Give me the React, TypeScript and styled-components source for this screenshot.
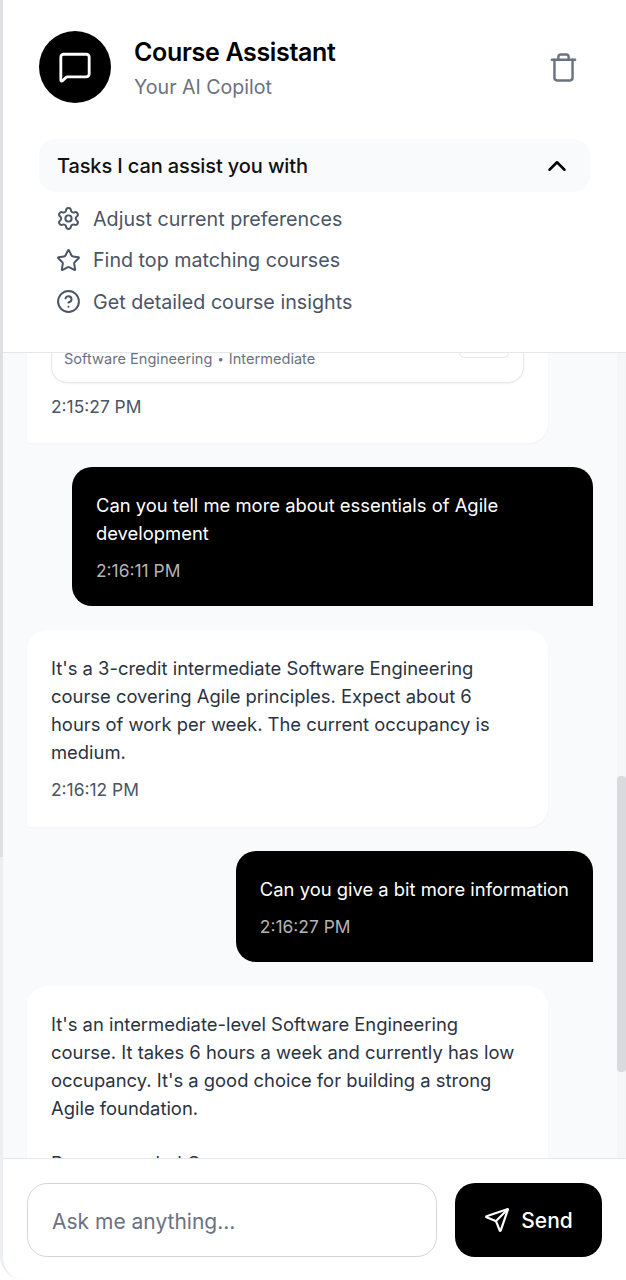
import React from "react";
import styled, { createGlobalStyle } from "styled-components";
import { MessageSquare, Trash, Settings, Star, CircleHelp, Send, ChevronUp } from "lucide-react";

const Global = createGlobalStyle`
  html, body { margin: 0; padding: 0; background: #ffffff; height: 100%; overflow: hidden; }
  #root { height: 100%; }
  * { box-sizing: border-box; }
`;

const Page = styled.div`
  position: relative;
  width: 626px;
  height: 1280px;
`;

const LeftRail = styled.div`
  position: absolute;
  top: 0;
  left: 0;
  width: 3px;
  height: 857px;
  background: #dfe0e3;
  z-index: 3;
`;

const Panel = styled.div`
  position: relative;
  width: 626px;
  height: 1280px;
  display: flex;
  flex-direction: column;
  background: #fff;
  font-family: Inter, "Liberation Sans", sans-serif;
  border-left: 3px solid #eceef1;
  border-bottom-left-radius: 24px;
  border-bottom-right-radius: 24px;
  overflow: hidden;
`;

const Header = styled.header`
  flex: 0 0 353px;
  padding: 31px 36px 0;
  background: #fff;
  border-bottom: 1px solid #e5e7eb;
  z-index: 2;
`;

const TitleRow = styled.div`
  display: flex;
  align-items: center;
  height: 72px;
`;

const Avatar = styled.div`
  width: 72px;
  height: 72px;
  border-radius: 50%;
  background: #000;
  color: #fff;
  display: flex;
  align-items: center;
  justify-content: center;
  flex: none;
`;

const TitleBlock = styled.div`
  margin-left: 23px;
  padding-top: 3px;
  flex: 1;
  display: flex;
  flex-direction: column;
`;

const Title = styled.h1`
  margin: 0;
  font-size: 25px;
  line-height: 32px;
  font-weight: 600;
  letter-spacing: -0.33px;
  color: #000;
`;

const Subtitle = styled.p`
  margin: 5px 0 0;
  font-size: 19.6px;
  line-height: 28px;
  color: #6b7280;
`;

const IconButton = styled.button`
  width: 31px;
  height: 34px;
  margin-right: 11px;
  padding: 0;
  border: 0;
  background: none;
  color: #6b7280;
  display: flex;
  align-items: center;
  justify-content: center;
`;

const TasksBar = styled.div`
  margin-top: 36px;
  height: 53px;
  border-radius: 16px;
  background: #f9fafb;
  display: flex;
  align-items: center;
  justify-content: space-between;
  padding: 0 18px;
  font-size: 20px;
  font-weight: 500;
  letter-spacing: -0.12px;
  color: #111;
`;

const TaskList = styled.ul`
  list-style: none;
  margin: 6px 0 0;
  padding: 0 17px;
  display: flex;
  flex-direction: column;
`;

const Task = styled.li`
  height: 41.5px;
  display: flex;
  align-items: center;
  gap: 12px;
  font-size: 19.7px;
  color: #4b5563;
  svg { color: #4b5563; flex: none; }
`;

const Messages = styled.main`
  position: relative;
  flex: 1;
  min-height: 0;
  background: #f9fafb;
  overflow: hidden;
  display: flex;
  flex-direction: column;
  gap: 24px;
  padding: 0 33px 0 24px;
`;

const Track = styled.div`
  position: absolute;
  top: 0;
  bottom: 0;
  right: 0;
  width: 9px;
  background: #f5f6f8;
`;

const BotBubble = styled.div<{ $clipped?: boolean }>`
  width: 521px;
  flex: none;
  align-self: flex-start;
  background: #fff;
  border-radius: ${(p) => (p.$clipped ? "0 0 20px 4px" : "20px 20px 20px 4px")};
  box-shadow: 0 1px 2px rgba(0, 0, 0, 0.04);
  padding: ${(p) => (p.$clipped ? "0 24px 25px" : "24px 24px 26px")};
`;

const UserBubble = styled.div`
  width: fit-content;
  max-width: 521px;
  flex: none;
  align-self: flex-end;
  background: #000;
  color: #fff;
  border-radius: 20px 20px 0 20px;
  padding: 24px;
`;

const Body = styled.p`
  margin: 0;
  font-size: 18.4px;
  line-height: 28px;
  color: #2b3340;
  ${UserBubble} & { color: #fff; }
`;

const Time = styled.div`
  margin-top: 12px;
  font-size: 17.4px;
  line-height: 23px;
  color: #4b5563;
  ${UserBubble} & { color: #b4b4b4; }
`;

const CourseCard = styled.div`
  position: relative;
  height: 30px;
  margin-bottom: 3px;
  border: 1px solid #e5e7eb;
  border-top: 0;
  border-radius: 0 0 16px 16px;
  box-shadow: 0 1px 2px rgba(0, 0, 0, 0.05);
  padding: 0 12px;
  font-size: 14.6px;
  line-height: 13px;
  color: #6b7280;
`;

const Dot = styled.span`
  font-size: 11px;
  margin: 0 1px;
  vertical-align: 1px;
`;

const CardButton = styled.span`
  position: absolute;
  top: -1px;
  right: 14px;
  width: 50px;
  height: 6px;
  border: 1px solid #e5e7eb;
  border-top: 0;
  border-radius: 0 0 10px 10px;
`;

const Cut = styled.div`
  margin-top: 27px;
  font-size: 18.4px;
  line-height: 28px;
  color: #2b3340;
`;

const Thumb = styled.div`
  position: absolute;
  top: 776px;
  right: 0;
  width: 9px;
  height: 296px;
  border-radius: 4px;
  background: #d9dadd;
  z-index: 1;
`;

const Footer = styled.footer`
  flex: 0 0 122px;
  background: #fff;
  border-top: 1px solid #e5e7eb;
  padding: 24px 24px 0;
  display: flex;
  align-items: flex-start;
  gap: 18px;
  z-index: 2;
`;

const Field = styled.input`
  width: 410px;
  height: 74px;
  border: 1px solid #d1d5db;
  border-radius: 20px;
  background: #fff;
  padding: 2px 24px 0;
  font: 400 21px Inter, "Liberation Sans", sans-serif;
  outline: none;
  &::placeholder { color: #6b7280; opacity: 1; }
`;

const SendButton = styled.button`
  width: 147px;
  height: 74px;
  border: 0;
  border-radius: 20px;
  background: #000;
  color: #fff;
  display: flex;
  align-items: center;
  justify-content: center;
  gap: 11px;
  font: 500 21px Inter, "Liberation Sans", sans-serif;
`;

export default function App() {
  return (
    <Page>
      <Global />
      <LeftRail />
      <Panel>
        <Header>
          <TitleRow>
            <Avatar><MessageSquare size={34} strokeWidth={2} /></Avatar>
            <TitleBlock>
              <Title>Course Assistant</Title>
              <Subtitle>Your AI Copilot</Subtitle>
            </TitleBlock>
            <IconButton aria-label="Clear"><Trash size={31} strokeWidth={1.9} /></IconButton>
          </TitleRow>
          <TasksBar>
            Tasks I can assist you with
            <ChevronUp size={30} strokeWidth={2} color="#000" />
          </TasksBar>
          <TaskList>
            <Task><Settings size={25} strokeWidth={1.9} />Adjust current preferences</Task>
            <Task><Star size={25} strokeWidth={1.9} />Find top matching courses</Task>
            <Task><CircleHelp size={25} strokeWidth={1.9} />Get detailed course insights</Task>
          </TaskList>
        </Header>
        <Messages>
          <Track />
          <BotBubble $clipped>
            <CourseCard>
              Software Engineering <Dot>•</Dot> Intermediate
              <CardButton />
            </CourseCard>
            <Time>2:15:27 PM</Time>
          </BotBubble>
          <UserBubble>
            <Body>Can you tell me more about essentials of Agile development</Body>
            <Time>2:16:11 PM</Time>
          </UserBubble>
          <BotBubble>
            <Body>It's a 3-credit intermediate Software Engineering course covering Agile principles. Expect about 6 hours of work per week. The current occupancy is medium.</Body>
            <Time>2:16:12 PM</Time>
          </BotBubble>
          <UserBubble>
            <Body>Can you give a bit more information</Body>
            <Time>2:16:27 PM</Time>
          </UserBubble>
          <BotBubble>
            <Body>It's an intermediate-level Software Engineering course. It takes 6 hours a week and currently has low occupancy. It's a good choice for building a strong Agile foundation.</Body>
            <Cut>Recommended Course</Cut>
          </BotBubble>
        </Messages>
        <Thumb />
        <Footer>
          <Field placeholder="Ask me anything..." />
          <SendButton><Send size={26} strokeWidth={2} />Send</SendButton>
        </Footer>
      </Panel>
    </Page>
  );
}
